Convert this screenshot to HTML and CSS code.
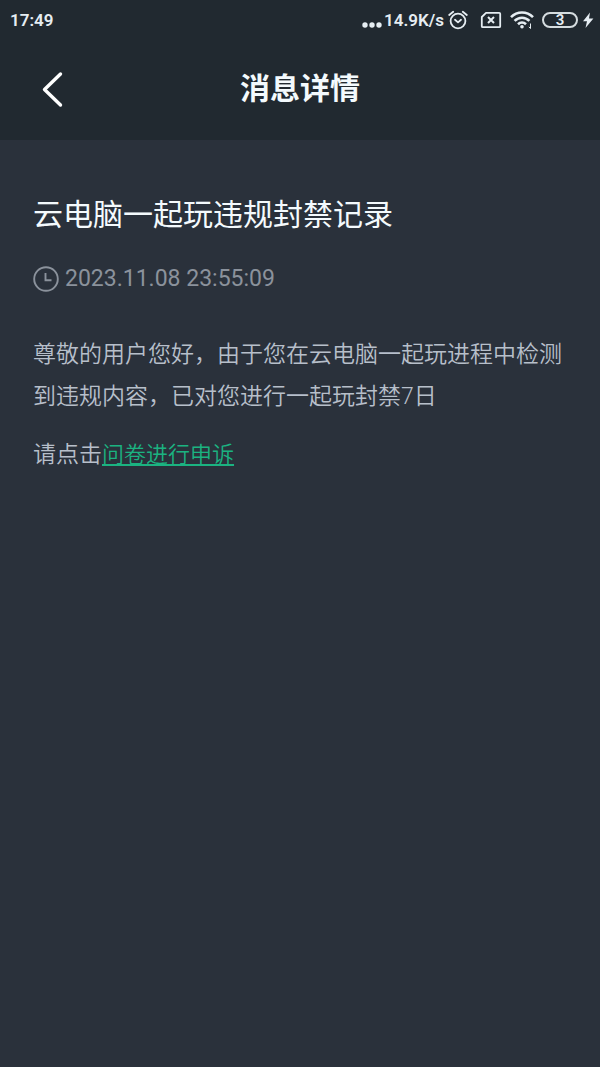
FILE: index.html
```html
<!DOCTYPE html>
<html lang="zh-CN">
<head>
  <meta charset="UTF-8" />
  <meta name="viewport" content="width=device-width, initial-scale=1.0" />
  <title>消息详情</title>
  <link rel="stylesheet" href="styles.css">
</head>
<body>

  <!-- === HEADER === -->
  <header class="header">
    <div class="status-bar">
      <span class="clock">17:49</span>
      <div class="status-icons">
        <svg class="dots" width="20" height="20" viewBox="0 0 20 20" fill="currentColor">
          <circle cx="3" cy="15" r="2.7"/><circle cx="10" cy="15" r="2.7"/><circle cx="17" cy="15" r="2.7"/>
        </svg>
        <span class="speed">14.9K/s</span>
        <svg class="alarm" width="20" height="20" viewBox="0 0 20 20" fill="none" stroke="currentColor" stroke-width="1.8" stroke-linecap="round" stroke-linejoin="round">
          <circle cx="10" cy="11" r="7.4"/>
          <path d="M7 9.8l3 2.6 3-2.6M1.2 5l4-3.3M18.8 5l-4-3.3"/>
        </svg>
        <svg class="sim" width="22" height="20" viewBox="0 0 22 20" fill="none" stroke="currentColor" stroke-width="1.8" stroke-linejoin="round">
          <path d="M6 2.8h13.2q1 0 1 1v12.4q0 1-1 1H2.8q-1 0-1-1V7z"/>
          <path d="M8 7l6 6M14 7l-6 6" stroke-width="2"/>
        </svg>
        <svg class="wifi" width="24" height="20" viewBox="0 0 24 20" fill="none" stroke="currentColor" stroke-width="2.6">
          <path d="M1 7.2c6.2-6.2 15.8-6.2 22 0M4.6 10.9c4.2-4.2 10.6-4.2 14.8 0M8 14.2c2.3-2.2 5.7-2.2 8 0"/>
          <circle cx="12" cy="16.8" r="1.8" fill="currentColor" stroke="none"/>
          <path d="M20.5 13.5v5M18.9 16.8l1.6 1.7" stroke-width="1"/>
        </svg>
        <span class="battery">3</span>
        <svg class="bolt" width="12" height="20" viewBox="0 0 12 20" fill="currentColor">
          <path d="M8 2.5L1 11.3h4L3.5 18 11.4 8.600H7z"/>
        </svg>
      </div>
    </div>
    <div class="nav-bar">
      <button class="back-btn" type="button" aria-label="返回">
        <svg width="24" height="40" viewBox="0 0 24 40" fill="none" stroke="currentColor" stroke-width="3.4" stroke-linecap="round" stroke-linejoin="round">
          <path d="M20.500 5L4.500 20.500 20.500 36"/>
        </svg>
      </button>
      <h1>消息详情</h1>
    </div>
  </header>

  <!-- === MESSAGE === -->
  <main class="message">
    <h2>云电脑一起玩违规封禁记录</h2>
    <div class="message-time">
      <svg width="26" height="26" viewBox="0 0 26 26" fill="none" stroke="currentColor" stroke-width="1.9">
        <circle cx="13" cy="13" r="11.8"/>
        <path d="M12.500 7v7.200h6"/>
      </svg>
      <time datetime="2023-11-08T23:55:09">2023.11.08 23:55:09</time>
    </div>
    <p>尊敬的用户您好，由于您在云电脑一起玩进程中检测到违规内容，已对您进行一起玩封禁7日</p>
    <p>请点击<a href="#">问卷进行申诉</a></p>
  </main>

</body>
</html>
```

FILE: styles.css
```css
* {
  margin: 0;
  padding: 0;
  box-sizing: border-box;
}

body {
  font-family: Roboto, "Noto Sans CJK SC", sans-serif;
  background: #2a313b;
  color: #f4fafd;
  min-height: 100vh;
}

svg {
  display: block;
  flex: none;
}

/* === HEADER === */
.header {
  background: #212930;
}

.status-bar {
  display: flex;
  justify-content: space-between;
  align-items: center;
  height: 40px;
  padding: 0 6px 0 10px;
  font-size: 17px;
  font-weight: 600;
  color: #e6edf2;
}

.status-icons {
  display: flex;
  align-items: center;
}

.speed {
  margin: 0 4px 0 2px;
}

.sim {
  margin-left: 12px;
}

.wifi {
  margin: 0 8px;
}

.battery {
  width: 36px;
  height: 16px;
  border: 2px solid #d5dcdf;
  border-radius: 8px;
  font-size: 15px;
  line-height: 12px;
  text-align: center;
}

.bolt {
  margin-left: 4px;
}

.nav-bar {
  display: grid;
  grid-template-columns: 40px 1fr 40px;
  align-items: center;
  height: 100px;
  padding: 0 32px 2px;
}

.back-btn {
  width: 40px;
  height: 40px;
  padding-left: 8px;
  background: none;
  border: none;
  color: #ffffff;
  cursor: pointer;
}

.nav-bar h1 {
  font-size: 30px;
  line-height: 40px;
  text-align: center;
}

/* === MESSAGE === */
.message {
  padding: 55px 33px;
}

.message h2 {
  font-size: 30px;
  font-weight: 400;
  line-height: 40px;
}

.message-time {
  display: flex;
  align-items: center;
  gap: 6px;
  margin: 29px 0 40px;
  font-size: 23px;
  line-height: 30px;
  color: #8b929c;
}

.message p {
  margin-bottom: 16px;
  font-size: 23px;
  font-weight: 350;
  line-height: 42px;
  color: #b7bfca;
}

.message a {
  font-size: 22px;
  color: #1bb381;
  text-decoration-thickness: 2px;
  text-underline-offset: 2px;
}
```
